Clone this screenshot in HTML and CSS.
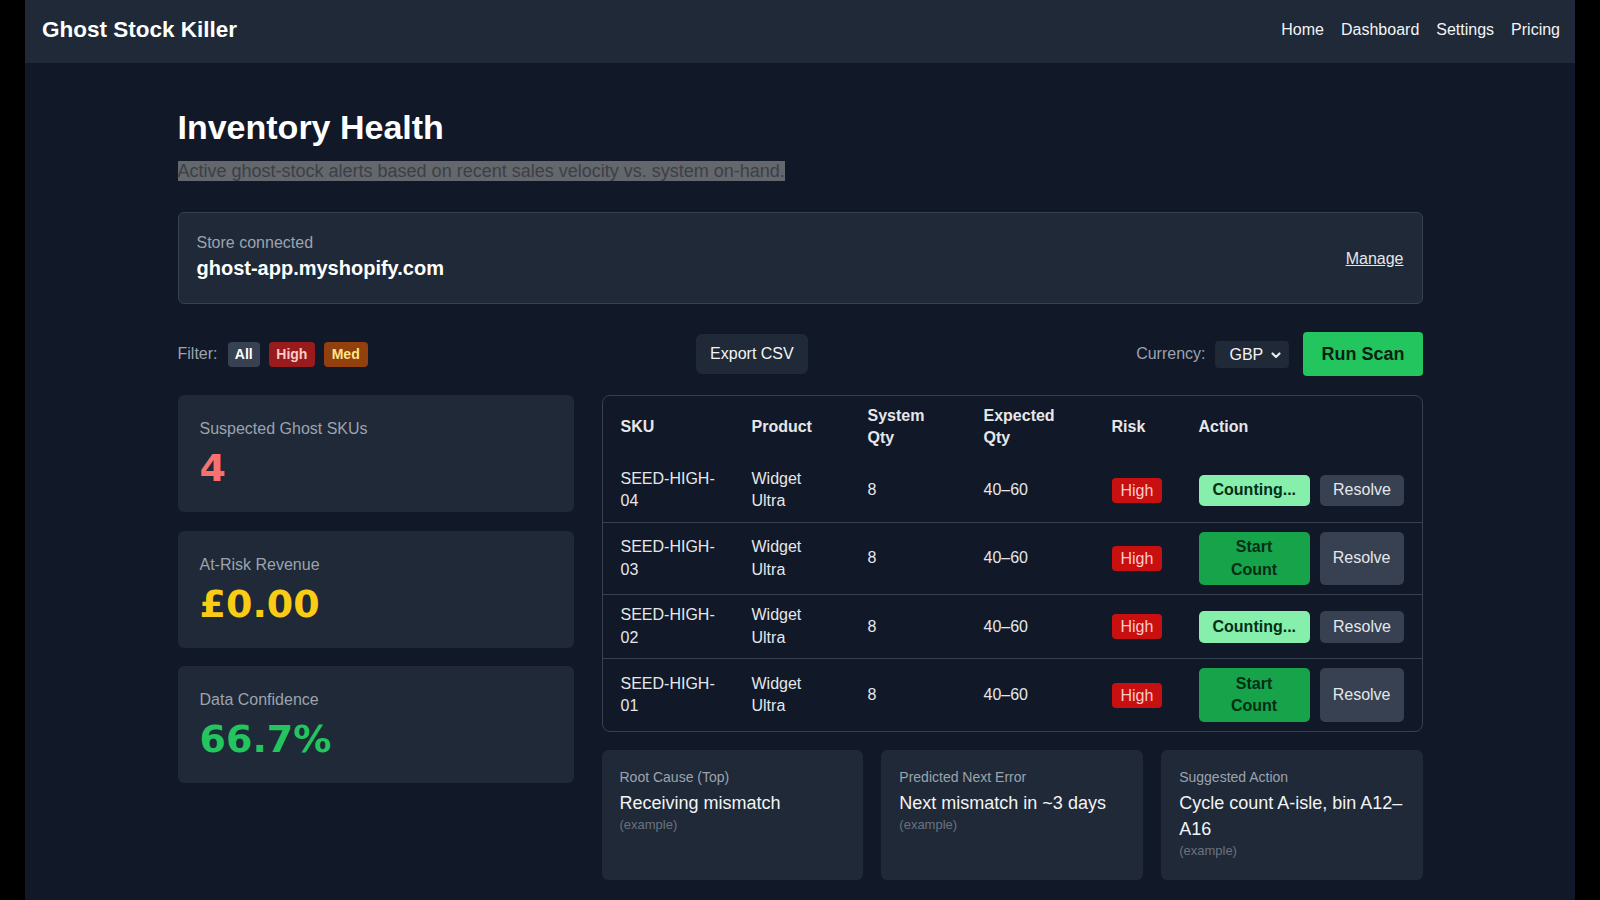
FILE: index.html
```html
<!DOCTYPE html>
<html lang="en">
<head>
  <meta charset="UTF-8">
  <meta name="viewport" content="width=device-width, initial-scale=1.0">
  <title>Ghost Stock Killer - Inventory Health</title>
  <link rel="stylesheet" href="styles.css">
</head>
<body>
  <div class="app">
    <nav class="navbar">
      <div class="brand">Ghost Stock Killer</div>
      <div class="nav-links">
        <a href="#">Home</a>
        <a href="#">Dashboard</a>
        <a href="#">Settings</a>
        <a href="#">Pricing</a>
      </div>
    </nav>

    <main class="container">
      <h1 class="page-title">Inventory Health</h1>
      <p class="subtitle"><span class="selected">Active ghost-stock alerts based on recent sales velocity vs. system on-hand.</span></p>

      <div class="store-card">
        <div>
          <div class="store-label">Store connected</div>
          <div class="store-domain">ghost-app.myshopify.com</div>
        </div>
        <a href="#" class="manage-link">Manage</a>
      </div>

      <div class="toolbar">
        <div class="filters">
          <span class="muted">Filter:</span>
          <button class="chip chip-all">All</button>
          <button class="chip chip-high">High</button>
          <button class="chip chip-med">Med</button>
        </div>
        <button class="btn-export">Export CSV</button>
        <div class="scan-group">
          <span class="muted">Currency:</span>
          <span class="select-wrap">
            <select class="currency">
              <option>GBP</option>
              <option>USD</option>
              <option>EUR</option>
            </select>
            <svg class="chevron" width="12" height="12" viewBox="0 0 12 12"><path d="M2.5 4.5 L6 8 L9.5 4.5" fill="none" stroke="#e5e7eb" stroke-width="2.2" stroke-linecap="round" stroke-linejoin="round"/></svg>
          </span>
          <button class="btn-scan">Run Scan</button>
        </div>
      </div>

      <div class="dash-grid">
        <div class="stats">
          <div class="stat-card">
            <div class="stat-label">Suspected Ghost SKUs</div>
            <div class="stat-value red">4</div>
          </div>
          <div class="stat-card">
            <div class="stat-label">At-Risk Revenue</div>
            <div class="stat-value yellow">£0.00</div>
          </div>
          <div class="stat-card">
            <div class="stat-label">Data Confidence</div>
            <div class="stat-value green">66.7%</div>
          </div>
        </div>

        <div class="right-col">
          <div class="table-wrap">
            <table class="alerts">
              <thead>
                <tr>
                  <th class="col-sku">SKU</th>
                  <th class="col-product">Product</th>
                  <th class="col-sys">System Qty</th>
                  <th class="col-exp">Expected Qty</th>
                  <th class="col-risk">Risk</th>
                  <th>Action</th>
                </tr>
              </thead>
              <tbody>
                <tr>
                  <td>SEED-HIGH-04</td>
                  <td>Widget Ultra</td>
                  <td>8</td>
                  <td>40–60</td>
                  <td><span class="risk">High</span></td>
                  <td><div class="actions"><button class="btn-count counting">Counting...</button><button class="btn-resolve">Resolve</button></div></td>
                </tr>
                <tr>
                  <td>SEED-HIGH-03</td>
                  <td>Widget Ultra</td>
                  <td>8</td>
                  <td>40–60</td>
                  <td><span class="risk">High</span></td>
                  <td><div class="actions"><button class="btn-count">Start Count</button><button class="btn-resolve">Resolve</button></div></td>
                </tr>
                <tr>
                  <td>SEED-HIGH-02</td>
                  <td>Widget Ultra</td>
                  <td>8</td>
                  <td>40–60</td>
                  <td><span class="risk">High</span></td>
                  <td><div class="actions"><button class="btn-count counting">Counting...</button><button class="btn-resolve">Resolve</button></div></td>
                </tr>
                <tr>
                  <td>SEED-HIGH-01</td>
                  <td>Widget Ultra</td>
                  <td>8</td>
                  <td>40–60</td>
                  <td><span class="risk">High</span></td>
                  <td><div class="actions"><button class="btn-count">Start Count</button><button class="btn-resolve">Resolve</button></div></td>
                </tr>
              </tbody>
            </table>
          </div>

          <div class="insights">
            <div class="insight-card">
              <div class="insight-label">Root Cause (Top)</div>
              <div class="insight-value">Receiving mismatch</div>
              <div class="insight-note">(example)</div>
            </div>
            <div class="insight-card">
              <div class="insight-label">Predicted Next Error</div>
              <div class="insight-value">Next mismatch in ~3 days</div>
              <div class="insight-note">(example)</div>
            </div>
            <div class="insight-card">
              <div class="insight-label">Suggested Action</div>
              <div class="insight-value">Cycle count A-isle, bin A12–A16</div>
              <div class="insight-note">(example)</div>
            </div>
          </div>
        </div>
      </div>
    </main>
  </div>
</body>
</html>
```

FILE: styles.css
```css
body {
  margin: 0;
  background-color: #000;
  font-family: "Liberation Sans", Arial, sans-serif;
  color: #e5e7eb;
}
button, select {
  font-family: inherit;
}
.app {
  width: 1550px;
  min-height: 100vh;
  margin: 0 auto;
  background-color: #111827;
}
.navbar {
  display: flex;
  justify-content: space-between;
  align-items: center;
  height: 59px;
  padding: 0 15px 4px 17px;
  background-color: #1f2937;
}
.brand {
  font-size: 22.5px;
  font-weight: bold;
  color: #fff;
}
.nav-links {
  display: flex;
  gap: 17px;
}
.nav-links a {
  color: #f3f4f6;
  text-decoration: none;
  font-size: 16px;
}
.container {
  width: 1245px;
  margin: 0 auto;
  padding-top: 44px;
}
.page-title {
  margin: 0;
  font-size: 34px;
  line-height: 41px;
  color: #fff;
}
.subtitle {
  margin: 10px 0 27px;
  font-size: 18px;
  line-height: 27px;
}
.selected {
  background-color: #64676c;
  color: #3b4048;
}
.store-card {
  display: flex;
  justify-content: space-between;
  align-items: center;
  padding: 19px 18px 21px;
  background-color: #1f2937;
  border: 1px solid #374151;
  border-radius: 6px;
}
.store-label {
  font-size: 16px;
  line-height: 22px;
  color: #9ca3af;
}
.store-domain {
  font-size: 20px;
  font-weight: bold;
  line-height: 28px;
  color: #fff;
}
.manage-link {
  color: #e5e7eb;
  font-size: 16px;
  margin-top: 4px;
}
.toolbar {
  display: flex;
  justify-content: space-between;
  align-items: center;
  margin-top: 28px;
}
.muted {
  color: #9ca3af;
  font-size: 16px;
}
.filters {
  display: flex;
  align-items: center;
  gap: 9px;
}
.filters .muted {
  margin-right: 1px;
}
.chip {
  border: none;
  border-radius: 4px;
  padding: 3px 7.3px;
  font-size: 14px;
  line-height: 19px;
  font-weight: bold;
  cursor: pointer;
}
.chip-all {
  background-color: #374151;
  color: #fff;
}
.chip-high {
  background-color: #991b1b;
  color: #fecaca;
}
.chip-med {
  background-color: #92400e;
  color: #fde68a;
  padding: 3px 8px;
}
.btn-export {
  background-color: #1f2937;
  color: #f3f4f6;
  border: none;
  border-radius: 6px;
  padding: 9px 14px;
  font-size: 16px;
  line-height: 22px;
  cursor: pointer;
}
.scan-group {
  display: flex;
  align-items: center;
}
.select-wrap {
  position: relative;
  margin: 0 14px 0 10px;
}
.currency {
  appearance: none;
  -webkit-appearance: none;
  width: 74px;
  height: 27px;
  padding: 0 0 0 14px;
  background-color: #1f2937;
  color: #f3f4f6;
  border: none;
  border-radius: 4px;
  font-size: 16px;
}
.chevron {
  position: absolute;
  right: 7px;
  top: 8px;
  pointer-events: none;
}
.btn-scan {
  background-color: #22c55e;
  color: #0b1f12;
  border: none;
  border-radius: 4px;
  padding: 9px 18px;
  font-size: 18px;
  line-height: 26px;
  font-weight: bold;
  cursor: pointer;
}
.dash-grid {
  display: grid;
  grid-template-columns: 396px 1fr;
  gap: 28px;
  margin-top: 19px;
}
.stats {
  display: flex;
  flex-direction: column;
  gap: 18.5px;
}
.stat-card {
  background-color: #1f2937;
  border-radius: 6px;
  padding: 23px 22px 21px;
}
.stat-label {
  font-size: 16px;
  line-height: 22px;
  color: #9ca3af;
}
.stat-value {
  margin-top: 5px;
  font-family: "DejaVu Sans", "Liberation Sans", sans-serif;
  font-size: 38px;
  line-height: 46px;
  font-weight: bold;
}
.stat-value.red {
  color: #f87171;
}
.stat-value.yellow {
  color: #facc15;
}
.stat-value.green {
  color: #22c55e;
}
.table-wrap {
  border: 1px solid #374151;
  border-radius: 8px;
  overflow: hidden;
}
.alerts {
  width: 100%;
  border-collapse: collapse;
  table-layout: fixed;
  font-size: 16px;
  line-height: 22.4px;
}
.alerts th, .alerts td {
  box-sizing: border-box;
  text-align: left;
  vertical-align: middle;
  padding: 9px 18px;
}
.alerts th {
  font-weight: bold;
  color: #e5e7eb;
}
.alerts td {
  color: #e5e7eb;
}
.alerts tbody tr + tr td {
  border-top: 1px solid #374151;
}
.col-sku { width: 131px; }
.col-product { width: 116px; }
.col-sys { width: 116px; }
.col-exp { width: 128px; }
.col-risk { width: 87px; }
.risk {
  display: inline-block;
  background-color: #c81010;
  color: #fecaca;
  border-radius: 4px;
  padding: 3px 9px;
  line-height: 19px;
}
.actions {
  display: flex;
  gap: 10px;
}
.btn-count {
  width: 112px;
  padding: 4.5px 14px;
  border: none;
  border-radius: 5px;
  background-color: #16a34a;
  color: #052e16;
  font-size: 16px;
  line-height: 22.4px;
  font-weight: bold;
  cursor: pointer;
}
.btn-count.counting {
  background-color: #86efac;
  white-space: nowrap;
}
.btn-resolve {
  padding: 4.5px 13px;
  border: none;
  border-radius: 5px;
  background-color: #374151;
  color: #e5e7eb;
  font-size: 16px;
  line-height: 22.4px;
  cursor: pointer;
}
.insights {
  display: grid;
  grid-template-columns: repeat(3, 1fr);
  gap: 18.5px;
  margin-top: 18px;
}
.insight-card {
  background-color: #1f2937;
  border-radius: 6px;
  padding: 18px;
  min-height: 94px;
}
.insight-label {
  font-size: 14px;
  line-height: 19.6px;
  color: #9ca3af;
}
.insight-value {
  margin-top: 2px;
  font-size: 18px;
  line-height: 26px;
  color: #f3f4f6;
}
.insight-note {
  font-size: 13px;
  line-height: 18px;
  color: #6b7280;
}
```
